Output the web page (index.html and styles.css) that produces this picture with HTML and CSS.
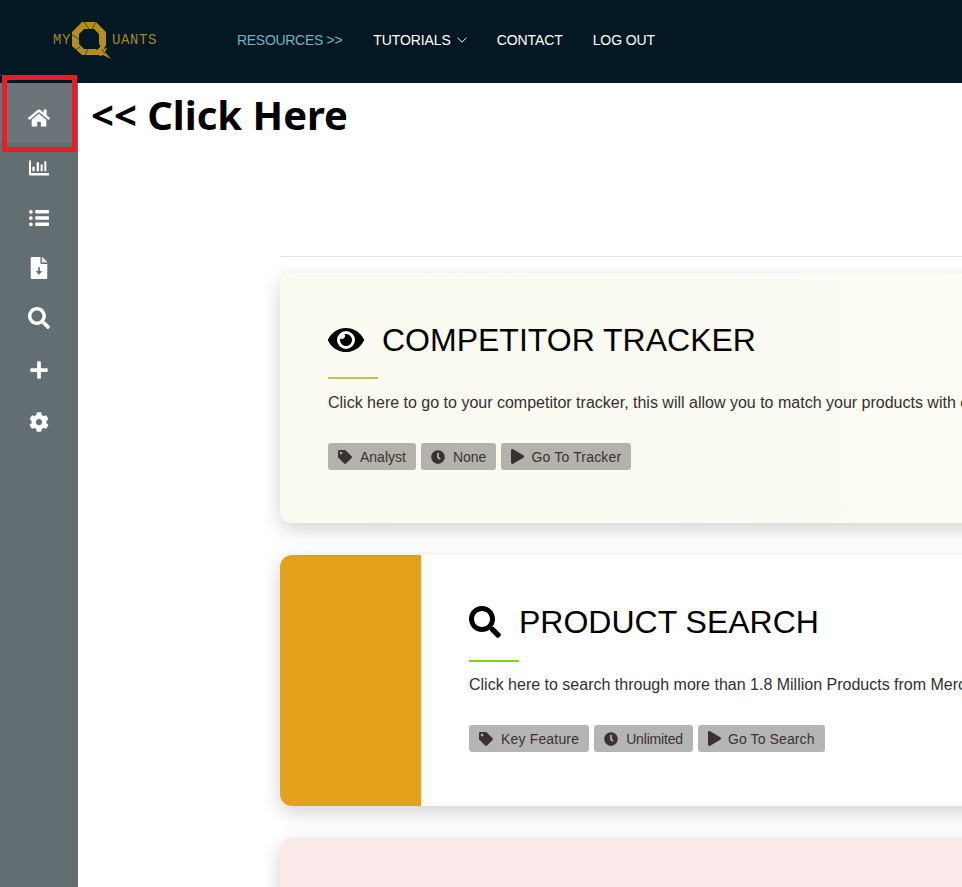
FILE: index.html
```html
<!DOCTYPE html>
<html lang="en">
<head>
<meta charset="utf-8">
<title>MyQuants</title>
<link rel="stylesheet" href="styles.css">
</head>
<body>
<svg class="sprite" aria-hidden="true">
  <symbol id="i-home" viewBox="0 0 576 512"><path d="M280.37 148.26L96 300.11V464a16 16 0 0 0 16 16l112.06-.29a16 16 0 0 0 15.92-16V368a16 16 0 0 1 16-16h64a16 16 0 0 1 16 16v95.64a16 16 0 0 0 16 16.05L464 480a16 16 0 0 0 16-16V300L295.67 148.26a12.19 12.19 0 0 0-15.3 0zM571.6 251.47L488 182.56V44.05a12 12 0 0 0-12-12h-56a12 12 0 0 0-12 12v72.61L318.47 43a48 48 0 0 0-61 0L4.34 251.47a12 12 0 0 0-1.6 16.9l25.5 31A12 12 0 0 0 45.15 301l235.22-193.74a12.19 12.19 0 0 1 15.3 0L530.9 301a12 12 0 0 0 16.9-1.6l25.5-31a12 12 0 0 0-1.7-16.93z"/></symbol>
  <symbol id="i-chart" viewBox="0 0 512 512"><path d="M85 226h60v114H85zM196 107h60v233h-60zM298 166h52v174h-52zM392 81h52v259h-52zM0 64h50v320h462v64H24a24 24 0 0 1-24-24z"/></symbol>
  <symbol id="i-list" viewBox="0 0 512 512"><path d="M48 48a48 48 0 1 0 48 48 48 48 0 0 0-48-48zm0 160a48 48 0 1 0 48 48 48 48 0 0 0-48-48zm0 160a48 48 0 1 0 48 48 48 48 0 0 0-48-48zM176 52h320a16 16 0 0 1 16 16v56a16 16 0 0 1-16 16H176a16 16 0 0 1-16-16V68a16 16 0 0 1 16-16zm0 160h320a16 16 0 0 1 16 16v56a16 16 0 0 1-16 16H176a16 16 0 0 1-16-16v-56a16 16 0 0 1 16-16zm0 160h320a16 16 0 0 1 16 16v56a16 16 0 0 1-16 16H176a16 16 0 0 1-16-16v-56a16 16 0 0 1 16-16z"/></symbol>
  <symbol id="i-file" viewBox="0 0 384 512"><path fill-rule="evenodd" d="M224 136V0H24C10.7 0 0 10.7 0 24v464c0 13.3 10.7 24 24 24h336c13.3 0 24-10.7 24-24V160H248c-13.2 0-24-10.8-24-24zM172 240h40v88h54l-74 88-74-88h54z"/><path fill-opacity=".8" d="M377 105L279.1 7c-4.5-4.5-10.6-7-17-7H256v128h128v-6.1c0-6.3-2.5-12.4-7-16.9z"/></symbol>
  <symbol id="i-search" viewBox="0 0 512 512"><path d="M505 442.7L405.3 343c-4.5-4.5-10.6-7-17-7H372c27.6-35.3 44-79.7 44-128C416 93.1 322.9 0 208 0S0 93.1 0 208s93.1 208 208 208c48.3 0 92.7-16.4 128-44v16.3c0 6.4 2.5 12.5 7 17l99.7 99.7c9.4 9.4 24.6 9.4 33.9 0l28.3-28.3c9.4-9.4 9.4-24.6.1-34zM208 336c-70.7 0-128-57.2-128-128 0-70.7 57.2-128 128-128 70.7 0 128 57.2 128 128 0 70.7-57.2 128-128 128z"/></symbol>
  <symbol id="i-plus" viewBox="0 0 448 512"><path d="M416 208H272V64c0-17.67-14.33-32-32-32h-32c-17.67 0-32 14.33-32 32v144H32c-17.67 0-32 14.33-32 32v32c0 17.67 14.33 32 32 32h144v144c0 17.67 14.33 32 32 32h32c17.67 0 32-14.33 32-32V304h144c17.67 0 32-14.33 32-32v-32c0-17.67-14.33-32-32-32z"/></symbol>
  <symbol id="i-cog" viewBox="0 0 512 512"><path d="M487.4 315.7l-42.6-24.6c4.3-23.2 4.3-47 0-70.2l42.6-24.6c4.9-2.8 7.1-8.6 5.5-14-11.1-35.6-30-67.8-54.7-94.6-3.8-4.1-10-5.1-14.8-2.3L380.8 110c-17.9-15.4-38.5-27.3-60.8-35.1V25.8c0-5.6-3.9-10.5-9.4-11.7-36.7-8.2-74.3-7.8-109.2 0-5.5 1.2-9.4 6.1-9.4 11.7V75c-22.2 7.9-42.8 19.8-60.8 35.1L88.7 85.5c-4.9-2.8-11-1.9-14.8 2.3-24.7 26.7-43.6 58.9-54.7 94.6-1.7 5.4.6 11.2 5.5 14L67.3 221c-4.3 23.2-4.3 47 0 70.2l-42.6 24.6c-4.9 2.8-7.1 8.6-5.5 14 11.1 35.6 30 67.8 54.7 94.6 3.8 4.1 10 5.1 14.8 2.3l42.6-24.6c17.9 15.4 38.5 27.3 60.8 35.1v49.2c0 5.6 3.9 10.5 9.4 11.7 36.7 8.2 74.3 7.8 109.2 0 5.5-1.2 9.4-6.1 9.4-11.7v-49.2c22.2-7.9 42.8-19.8 60.8-35.1l42.6 24.6c4.9 2.8 11 1.9 14.8-2.3 24.7-26.7 43.6-58.9 54.7-94.6 1.5-5.5-.7-11.3-5.6-14.1zM256 336c-44.1 0-80-35.9-80-80s35.9-80 80-80 80 35.9 80 80-35.9 80-80 80z"/></symbol>
  <symbol id="i-eye" viewBox="0 0 576 512"><path d="M572.52 241.4C518.29 135.59 410.93 64 288 64S57.68 135.64 3.48 241.41a32.35 32.35 0 0 0 0 29.19C57.71 376.41 165.07 448 288 448s230.32-71.64 284.52-177.41a32.35 32.35 0 0 0 0-29.19zM288 400a144 144 0 1 1 144-144 143.93 143.93 0 0 1-144 144zm0-240a95.31 95.31 0 0 0-25.31 3.79 47.85 47.85 0 0 1-66.9 66.9A95.78 95.78 0 1 0 288 160z"/></symbol>
  <symbol id="i-tag" viewBox="0 0 512 512"><path d="M0 252.118V48C0 21.49 21.49 0 48 0h204.118a48 48 0 0 1 33.941 14.059l211.882 211.882c18.745 18.745 18.745 49.137 0 67.882L293.823 497.941c-18.745 18.745-49.137 18.745-67.882 0L14.059 286.059A48 48 0 0 1 0 252.118zM112 64c-26.51 0-48 21.49-48 48s21.49 48 48 48 48-21.49 48-48-21.49-48-48-48z"/></symbol>
  <symbol id="i-clock" viewBox="0 0 512 512"><path d="M256 8C119 8 8 119 8 256s111 248 248 248 248-111 248-248S393 8 256 8zm92.49 313l-20 25a16 16 0 0 1-22.49 2.5l-67-49.72a40 40 0 0 1-15-31.23V112a16 16 0 0 1 16-16h32a16 16 0 0 1 16 16v144l58 42.5a16 16 0 0 1 2.49 22.5z"/></symbol>
  <symbol id="i-play" viewBox="0 0 448 512"><path d="M424.4 214.7L72.4 6.6C43.8-10.3 0 6.1 0 47.9V464c0 37.5 40.7 60.1 72.4 41.3l352-208c31.4-18.5 31.5-64.1 0-82.6z"/></symbol>
</svg>

<header class="topbar">
  <a class="logo" href="#">
    <span class="logo-text">MY</span>
    <svg class="logo-q" viewBox="0 0 39 37" aria-hidden="true">
      <path fill="#b68e1d" fill-rule="evenodd" d="M10 0H24L34 10V23L31 28L27 22V12L22 7H12L7 12V22L12 27H24L29 33H10L0 24V10Z"/>
      <path fill="#b68e1d" d="M24 29L29 24L31 27L35 26L33 30L39 37L31 33L28 34Z"/>
      <path stroke="#041824" stroke-width=".6" fill="none" d="M12 0L17 7M24 0L20 7M0 13L7 17M8 25L3 28M16 27L13 33M30 27L33 32"/>
    </svg>
    <span class="logo-text">UANTS</span>
  </a>
  <nav class="nav">
    <a class="nav-link is-active" href="#">RESOURCES &gt;&gt;</a>
    <a class="nav-link" href="#">TUTORIALS
      <svg class="chev" viewBox="0 0 10 6" aria-hidden="true"><path d="M.5.7L5 5.2 9.5.7" fill="none" stroke="currentColor"/></svg>
    </a>
    <a class="nav-link" href="#">CONTACT</a>
    <a class="nav-link" href="#">LOG OUT</a>
  </nav>
</header>

<div class="shell">
  <aside class="sidebar">
    <a class="side-item is-current" href="#"><svg class="side-icon"><use href="#i-home"/></svg></a>
    <a class="side-item" href="#"><svg class="side-icon"><use href="#i-chart"/></svg></a>
    <a class="side-item" href="#"><svg class="side-icon"><use href="#i-list"/></svg></a>
    <a class="side-item" href="#"><svg class="side-icon side-icon-tall"><use href="#i-file"/></svg></a>
    <a class="side-item" href="#"><svg class="side-icon side-icon-tall"><use href="#i-search"/></svg></a>
    <a class="side-item side-item-spaced" href="#"><svg class="side-icon"><use href="#i-plus"/></svg></a>
    <a class="side-item side-item-spaced" href="#"><svg class="side-icon"><use href="#i-cog"/></svg></a>
  </aside>

  <main class="main">
    <h2 class="click-note">&lt;&lt; Click Here</h2>
    <div class="content">
      <hr class="rule">

      <article class="card card-cream">
        <div class="card-body">
          <h3 class="card-title"><svg class="title-icon title-eye"><use href="#i-eye"/></svg>COMPETITOR TRACKER</h3>
          <div class="accent accent-olive"></div>
          <p class="card-text">Click here to go to your competitor tracker, this will allow you to match your products with competitors and follow their sales.</p>
          <div class="pills pills-warm">
            <span class="pill"><svg class="pill-icon"><use href="#i-tag"/></svg>Analyst</span>
            <span class="pill"><svg class="pill-icon"><use href="#i-clock"/></svg>None</span>
            <span class="pill pill-wide"><svg class="pill-icon pill-icon-play"><use href="#i-play"/></svg>Go To Tracker</span>
          </div>
        </div>
      </article>

      <article class="card card-white">
        <div class="card-side"></div>
        <div class="card-body">
          <h3 class="card-title"><svg class="title-icon title-search"><use href="#i-search"/></svg>PRODUCT SEARCH</h3>
          <div class="accent accent-green"></div>
          <p class="card-text">Click here to search through more than 1.8 Million Products from Mercado Libre and find your next opportunity.</p>
          <div class="pills">
            <span class="pill pill-wide"><svg class="pill-icon"><use href="#i-tag"/></svg>Key Feature</span>
            <span class="pill pill-tight"><svg class="pill-icon"><use href="#i-clock"/></svg>Unlimited</span>
            <span class="pill pill-snug"><svg class="pill-icon pill-icon-play"><use href="#i-play"/></svg>Go To Search</span>
          </div>
        </div>
      </article>

      <article class="card card-pink"></article>
    </div>
  </main>
</div>

<div class="highlight"></div>
</body>
</html>
```
FILE: styles.css
```css
* { box-sizing: border-box; }
html, body { margin: 0; height: 887px; overflow: hidden; background: #fff; }
body { width: 962px; font-family: "Liberation Sans", Arial, sans-serif; position: relative; }
a { text-decoration: none; color: inherit; }
.sprite { display: none; }

.topbar { height: 83px; background: #041824; display: flex; align-items: center; padding: 0 0 3px 53px; }
.logo { display: flex; align-items: center; width: 184px; }
.logo-text { font-family: "Liberation Mono", monospace; font-size: 14px; letter-spacing: .6px; color: #a5851f; }
.logo-q { width: 39px; height: 37px; margin: 0 1px 0 1px; flex: none; }
.nav { display: flex; gap: 30px; }
.nav-link { font-size: 14px; letter-spacing: -.1px; color: #fff; display: flex; align-items: center; gap: 6px; }
.nav-link.is-active { color: #6fb1c6; letter-spacing: -.3px; margin-right: 1px; }
.chev { width: 10px; height: 6px; }

.shell { display: flex; height: 804px; }
.sidebar { width: 78px; flex: none; background: #636e73; display: flex; flex-direction: column; }
.side-item { height: 50px; flex: none; display: flex; align-items: center; justify-content: center; }
.side-item.is-current { height: 60px; padding-top: 10px; background: #6a7479; }
.side-item-spaced { margin-top: 2px; }
.side-icon { width: 22px; height: 20px; fill: #fff; }
.side-icon-tall { height: 22px; }

.main { flex: 1; min-width: 0; position: relative; }
.click-note { margin: 0; padding: 7px 0 0 13px; height: 173px; font-family: "Noto Sans", "Open Sans", sans-serif; font-size: 40px; line-height: 50px; font-weight: 700; color: #000; }
.content { margin-left: 202px; width: 1100px; }
.rule { margin: 0 0 16px; border: 0; border-top: 1px solid #e2e2e2; }

.card { display: flex; border-radius: 12px; margin-bottom: 32px; height: 250px; box-shadow: 0 6px 20px rgba(0,0,0,.18); overflow: hidden; background: #fff; }
.card-white { height: 251px; }
.card-cream { background: linear-gradient(90deg, #fbfaf0, #fdfcf6); }
.card-pink { background: #f9e9e9; }
.card-side { width: 141px; flex: none; background: #e3a11c; }
.card-body { padding: 48px 0 0 48px; flex: 1; min-width: 0; }
.card-title { margin: 0; display: flex; align-items: center; height: 38px; font-size: 32px; font-weight: 400; color: #000; white-space: nowrap; }
.title-icon { fill: #000; flex: none; }
.title-eye { width: 36px; height: 32px; margin-right: 18px; }
.title-search { width: 32px; height: 32px; margin-right: 18px; }
.accent { width: 50px; height: 2px; margin-top: 18px; }
.accent-olive { background: #c4c04e; }
.accent-green { background: #7ed60f; margin: 19px 0 -1px; }
.card-text { margin: 14px 0 0; font-size: 16px; line-height: 20px; color: #33302f; white-space: nowrap; }
.pills { display: flex; gap: 5px; margin-top: 30px; }
.pill { display: flex; align-items: center; height: 27px; padding: 0 10px; border-radius: 3px; background: #b5b5b5; color: #3a3232; font-size: 14px; }
.pill-wide { letter-spacing: .17px; }
.pill-snug { letter-spacing: .1px; }
.pill-tight { letter-spacing: -.17px; }
.pills-warm .pill { background: #b3b2ab; }
.pill-icon { width: 14px; height: 14px; fill: #3a3232; margin-right: 8px; flex: none; }
.pill-icon-play { width: 13px; height: 15px; margin-right: 7px; }

.highlight { position: absolute; left: 2px; top: 75px; width: 75px; height: 77px; border: 5px solid #ed1c24; pointer-events: none; }
```
